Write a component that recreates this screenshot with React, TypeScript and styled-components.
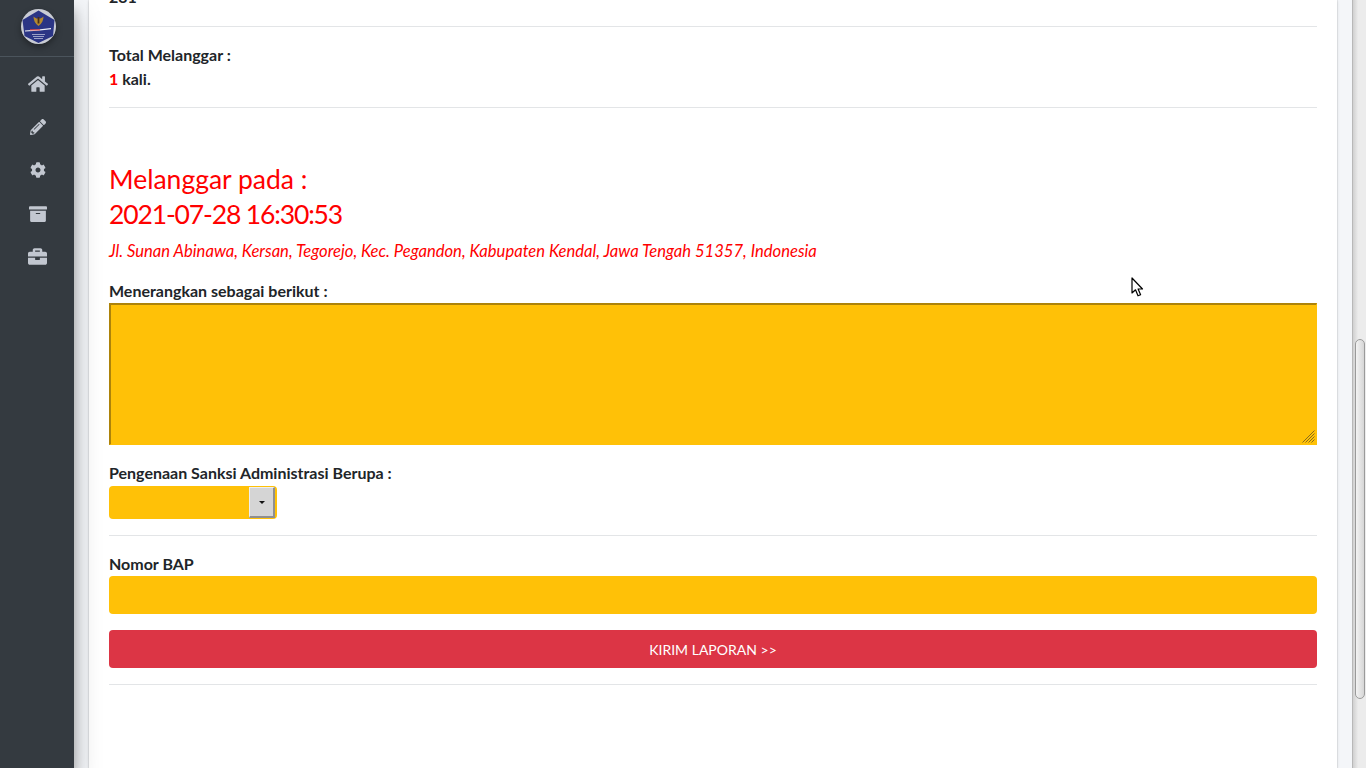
import React from "react";
import styled, { createGlobalStyle } from "styled-components";
import { FaHome, FaPencilAlt, FaCog, FaArchive, FaBriefcase } from "react-icons/fa";

const Global = createGlobalStyle`
  html, body { margin: 0; padding: 0; height: 100%; overflow: hidden; background: #f4f6f9; }
  * { box-sizing: border-box; }
  body { font-family: Lato, "Noto Sans", "Liberation Sans", sans-serif; font-size: 16px; color: #212529; }
`;

const Shell = styled.div`
  display: flex;
  position: relative;
  width: 1366px;
  height: 768px;
  overflow: hidden;
`;
const Sidebar = styled.aside`
  width: 74px;
  flex: none;
  background: #343a40;
  box-shadow: 0 14px 28px rgba(0,0,0,.25), 0 10px 10px rgba(0,0,0,.22);
  z-index: 2;
`;
const Brand = styled.div`
  height: 57px;
  display: flex;
  justify-content: center;
  padding-top: 9px;
  border-bottom: 1px solid #4b545c;
`;
const LogoWrap = styled.div`
  width: 35px;
  height: 35px;
  margin-left: 2px;
  border-radius: 50%;
  box-shadow: 0 3px 6px rgba(0,0,0,.35);
  svg { display: block; }
`;
const Nav = styled.nav`
  display: flex;
  flex-direction: column;
  align-items: center;
  padding-top: 5px;
  padding-left: 1px;
`;
const NavItem = styled.a`
  height: 43.3px;
  display: flex;
  align-items: center;
  color: #c2c7d0;
`;
const Main = styled.main`
  flex: 1;
  min-width: 0;
  padding: 0 15px;
  background: #f4f6f9;
`;
const Card = styled.section`
  height: 768px;
  background: #fff;
  box-shadow: 0 0 1px rgba(0,0,0,.3), 0 1px 3px rgba(0,0,0,.15);
  padding: 0 20px;
  overflow: hidden;
`;
const Clipped = styled.div`
  margin-top: -15px;
  height: 24px;
  line-height: 24px;
  font-weight: 700;
  font-size: 16px;
`;
const Rule = styled.hr<{ $top: number; $bottom: number }>`
  border: 0;
  border-top: 1px solid #e3e5e7;
  height: 0;
  margin: ${p => p.$top}px 0 ${p => p.$bottom}px;
`;
const Label = styled.div<{ $gap?: number }>`
  font-weight: 700;
  font-size: 16px;
  line-height: 24px;
  height: 24px;
  margin-top: ${p => p.$gap ?? 0}px;
`;
const Red = styled.span`
  color: #ff0000;
`;
const Heading = styled.h3`
  margin: -1px 0 0;
  font-weight: 400;
  font-size: 26.5px;
  line-height: 35px;
  color: #ff0000;
`;
const Stamp = styled.span`
  letter-spacing: -1.15px;
`;
const Address = styled.p`
  margin: 7px 0 0;
  font-style: italic;
  font-size: 16.6px;
  line-height: 24px;
  color: #ff0000;
`;
const TextArea = styled.div`
  position: relative;
  height: 142px;
  background: #ffc107;
  border-top: 2px solid #ad830a;
  border-left: 2px solid #ad830a;
  border-right: 1px solid #ffc107;
  border-bottom: 1px solid #ffc107;
`;
const Grip = styled.svg`
  position: absolute;
  right: 1px;
  bottom: 1px;
`;
const SelectBox = styled.div`
  width: 168px;
  height: 33px;
  margin-top: 1px;
  background: #ffc107;
  border-radius: 4px;
  display: flex;
  justify-content: flex-end;
  padding: 1px 2px 1px 0;
`;
const SelectButton = styled.div`
  width: 26px;
  display: flex;
  align-items: center;
  justify-content: center;
  background: #d5d5d5;
  border-top: 1px solid #eee;
  border-left: 1px solid #eee;
  border-right: 2px solid #8f8f8f;
  border-bottom: 2px solid #8f8f8f;
`;
const Caret = styled.i`
  width: 0;
  height: 0;
  border-left: 3px solid transparent;
  border-right: 3px solid transparent;
  border-top: 3px solid #111;
`;
const Input = styled.div`
  height: 38px;
  background: #ffc107;
  border-radius: 4px;
`;
const SubmitButton = styled.button`
  display: block;
  width: 100%;
  height: 38px;
  margin-top: 16px;
  border: 0;
  border-radius: 4px;
  background: #dc3545;
  color: #fff;
  font-family: inherit;
  font-size: 14px;
`;
const Scrollbar = styled.div`
  width: 14px;
  flex: none;
  padding-top: 339px;
  display: flex;
  justify-content: center;
  background: linear-gradient(90deg, #d0d0d0, #ececec 40%, #ececec);
  border-left: 1px solid #b8b8b8;
`;
const Thumb = styled.div`
  width: 10px;
  height: 360px;
  border: 1px solid #9a9a9a;
  border-radius: 5px;
  background: linear-gradient(90deg, #f3f3f3, #d6d6d6);
`;
const Pointer = styled.svg`
  position: absolute;
  left: 1131px;
  top: 277px;
  z-index: 3;
`;

function Logo() {
  return (
    <svg width="35" height="35" viewBox="0 0 35 35">
      <circle cx="17.5" cy="17.5" r="17.5" fill="#c9ccd4" />
      <path d="M17.500 1.500 33.500 11 32 27 17.500 34 3.500 27 1.500 11Z" fill="#2b3585" />
      <path d="M17.500 9c.8 1 2.500.6 5-1.500 0 3.500-1.500 7-5 9.500-3.500-2.500-5-6-5-9.500 2.500 2.100 4.200 2.500 5 1.500Z" fill="#b58a2e" />
      <path d="M16.600 8h1.800v6.500h-1.800Z" fill="#4a2f18" />
      <path d="M4 21.500 17 20.500 30 19v1.200l-13 1.500-13 .9Z" fill="#eceef5" />
      <path d="M9 20.300h10v1.100H9Z" fill="#e0433e" />
      <path d="M11 25.500h13M12 27.500h11M13 29.500h9" stroke="#b8bcd8" strokeWidth=".8" />
    </svg>
  );
}

export default function App() {
  return (
    <Shell>
      <Global />
      <Sidebar>
        <Brand><LogoWrap><Logo /></LogoWrap></Brand>
        <Nav>
          <NavItem><FaHome size={20} /></NavItem>
          <NavItem><FaPencilAlt size={16} /></NavItem>
          <NavItem><FaCog size={16} /></NavItem>
          <NavItem><FaArchive size={18} /></NavItem>
          <NavItem><FaBriefcase size={19} /></NavItem>
        </Nav>
      </Sidebar>
      <Main>
        <Card>
          <Clipped>231</Clipped>
          <Rule $top={17} $bottom={16} />
          <Label>Total Melanggar :</Label>
          <Label><Red>1</Red> kali.</Label>
          <Rule $top={16} $bottom={55} />
          <Heading>Melanggar pada :<br /><Stamp>2021-07-28 16:30:53</Stamp></Heading>
          <Address>Jl. Sunan Abinawa, Kersan, Tegorejo, Kec. Pegandon, Kabupaten Kendal, Jawa Tengah 51357, Indonesia</Address>
          <Label $gap={16}>Menerangkan sebagai berikut :</Label>
          <TextArea>
            <Grip width="14" height="14" viewBox="0 0 14 14">
              <path d="M1.500 13.500 13.500 1.500M4.500 13.500l9-9M7.500 13.500l6-6M10.500 13.500l3-3" stroke="#8a6d1c" strokeWidth="1" fill="none" />
            </Grip>
          </TextArea>
          <Label $gap={16}>Pengenaan Sanksi Administrasi Berupa :</Label>
          <SelectBox><SelectButton><Caret /></SelectButton></SelectBox>
          <Rule $top={16} $bottom={16} />
          <Label>Nomor BAP</Label>
          <Input />
          <SubmitButton>KIRIM LAPORAN &gt;&gt;</SubmitButton>
          <Rule $top={16} $bottom={0} />
        </Card>
      </Main>
      <Scrollbar><Thumb /></Scrollbar>
      <Pointer width="13" height="20" viewBox="0 0 13 20">
        <path d="M1 1v15l3.500-3.200 2.500 6 2.600-1.100-2.500-5.700h4.400Z" fill="#fff" stroke="#000" strokeWidth="1.200" strokeLinejoin="round" />
      </Pointer>
    </Shell>
  );
}
